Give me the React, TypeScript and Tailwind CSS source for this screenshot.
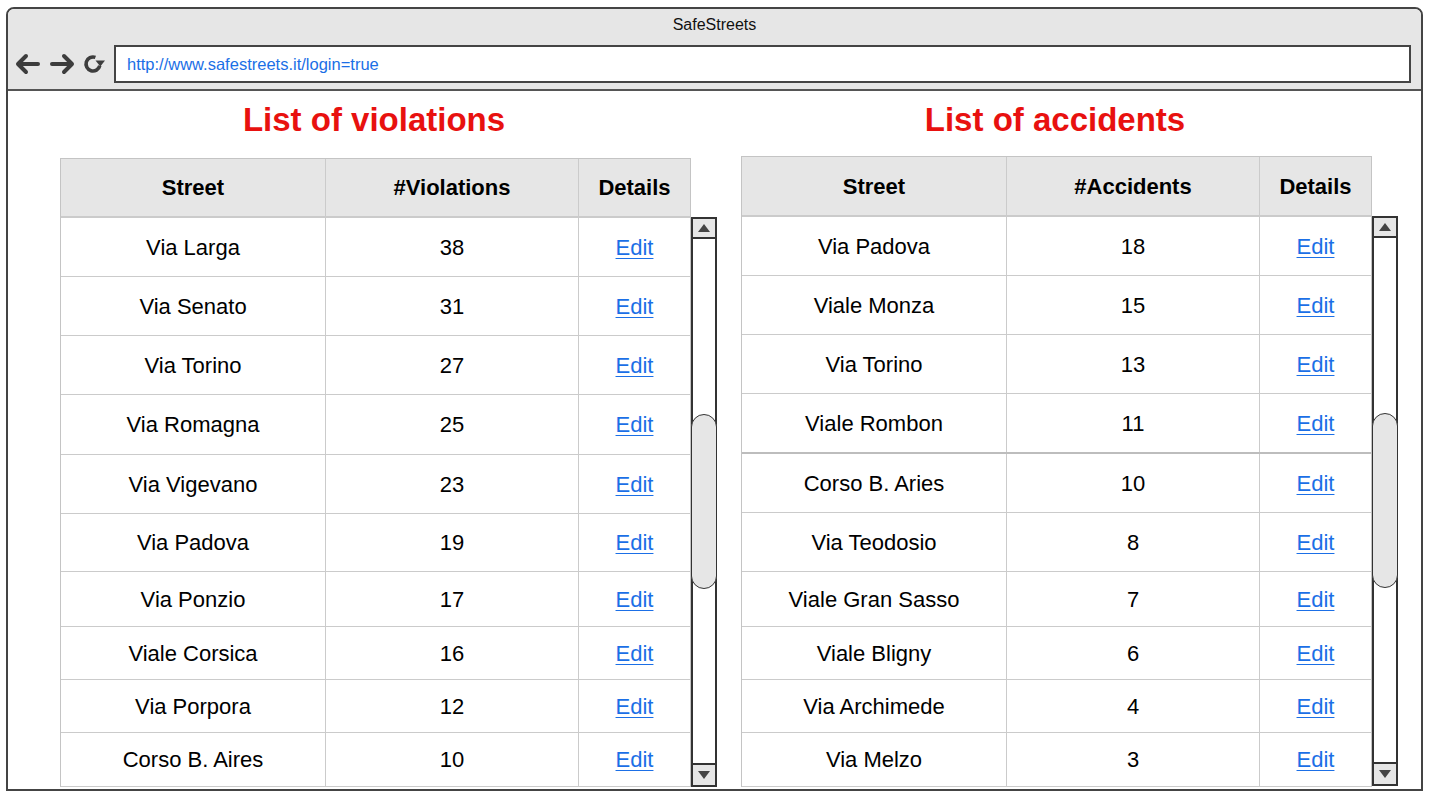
import React from 'react';

type Row = { street: string; count: number; h: number; thick?: boolean };

const violations: Row[] = [
  { street: 'Via Larga', count: 38, h: 59 },
  { street: 'Via Senato', count: 31, h: 59 },
  { street: 'Via Torino', count: 27, h: 59 },
  { street: 'Via Romagna', count: 25, h: 60 },
  { street: 'Via Vigevano', count: 23, h: 59 },
  { street: 'Via Padova', count: 19, h: 58 },
  { street: 'Via Ponzio', count: 17, h: 55 },
  { street: 'Viale Corsica', count: 16, h: 53 },
  { street: 'Via Porpora', count: 12, h: 53 },
  { street: 'Corso B. Aires', count: 10, h: 54 },
];

const accidents: Row[] = [
  { street: 'Via Padova', count: 18, h: 59 },
  { street: 'Viale Monza', count: 15, h: 59 },
  { street: 'Via Torino', count: 13, h: 59 },
  { street: 'Viale Rombon', count: 11, h: 60, thick: true },
  { street: 'Corso B. Aries', count: 10, h: 59 },
  { street: 'Via Teodosio', count: 8, h: 59 },
  { street: 'Viale Gran Sasso', count: 7, h: 55 },
  { street: 'Viale Bligny', count: 6, h: 53 },
  { street: 'Via Archimede', count: 4, h: 53 },
  { street: 'Via Melzo', count: 3, h: 54 },
];

const Scrollbar: React.FC<{ top: string }> = ({ top }) => (
  <div className={`${top} w-[26px] h-[570px] border-2 border-[#333] flex flex-col bg-white`}>
    <div className="h-[20px] bg-[#e6e6e6] border-b-2 border-[#333] flex items-center justify-center">
      <svg width="14" height="10" viewBox="0 0 14 10"><path d="M7 1 L13 9 L1 9 Z" fill="#444" /></svg>
    </div>
    <div className="mt-[175px] -mx-[2px] h-[175px] rounded-full bg-[#e6e6e6] border-[1.5px] border-[#333]" />
    <div className="flex-1" />
    <div className="h-[22px] bg-[#e6e6e6] border-t-2 border-[#333] flex items-center justify-center">
      <svg width="14" height="10" viewBox="0 0 14 10"><path d="M1 1 L13 1 L7 9 Z" fill="#444" /></svg>
    </div>
  </div>
);

const DataTable: React.FC<{ label: string; rows: Row[]; headH: string }> = ({ label, rows, headH }) => (
  <div className="w-[631px] border-l border-r border-t border-[#c4c4c4] text-[22px] text-black">
    <div className={`flex ${headH} bg-[#e6e6e6] border-b-2 border-[#cbcbcb] font-bold`}>
      <div className="w-[265px] border-r border-[#cbcbcb] flex items-center justify-center">Street</div>
      <div className="w-[253px] border-r border-[#cbcbcb] flex items-center justify-center">{label}</div>
      <div className="flex-1 flex items-center justify-center">Details</div>
    </div>
    {rows.map(r => (
      <div
        key={r.street}
        style={{ height: r.h }}
        className={`flex ${r.thick ? 'border-b-2 border-[#bdbdbd]' : 'border-b border-[#cbcbcb]'}`}
      >
        <div className="w-[265px] border-r border-[#cbcbcb] flex items-center justify-center">{r.street}</div>
        <div className="w-[253px] border-r border-[#cbcbcb] flex items-center justify-center">{r.count}</div>
        <div className="flex-1 flex items-center justify-center">
          <a className="text-[#1b6fe6] underline underline-offset-[3px] decoration-1">Edit</a>
        </div>
      </div>
    ))}
  </div>
);

const App: React.FC = () => {
  return (
    <div className="w-[1434px] h-[803px] bg-white pt-[7px] pl-[6px] font-['Liberation_Sans',Arial,sans-serif]">
      {/* Finestra del browser */}
      <div className="w-[1417px] h-[784px] border-2 border-[#444] rounded-t-[8px] overflow-hidden flex flex-col">
        <div className="h-[82px] bg-[#e6e6e6] border-b-2 border-[#555] flex flex-col">
          <div className="pt-[6px] text-[16px] leading-[20px] text-center text-[#111]">SafeStreets</div>
          <div className="mt-[10px] flex items-center">
            <div className="w-[106px] flex items-center gap-[8px] pl-[7px]">
              <svg width="26" height="22" viewBox="0 0 26 22" fill="none" stroke="#3d3d3d" strokeWidth="4" strokeLinecap="round" strokeLinejoin="round">
                <path d="M23 11 H4 M11 3 L3 11 L11 19" />
              </svg>
              <svg width="26" height="22" viewBox="0 0 26 22" fill="none" stroke="#3d3d3d" strokeWidth="4" strokeLinecap="round" strokeLinejoin="round">
                <path d="M3 11 H22 M15 3 L23 11 L15 19" />
              </svg>
              <svg width="22" height="22" viewBox="0 0 22 22">
                <path d="M12.4 4.4 A7 7 0 1 0 16.8 12.8" fill="none" stroke="#3d3d3d" strokeWidth="3.6" />
                <path d="M12.5 7.5 L22 7.5 L17.3 13.5 Z" fill="#3d3d3d" />
              </svg>
            </div>
            <div className="w-[1297px] h-[38px] bg-white border-2 border-[#444] flex items-center pl-[11px] text-[16.5px] text-[#1b6fe6]">
              http://www.safestreets.it/login=true
            </div>
          </div>
        </div>

        {/* Contenuto */}
        <div className="flex pl-[52px] gap-[24px]">
          <div className="flex flex-col">
            <h1 className="w-[628px] pt-[10px] text-center text-[33px] leading-[38px] font-bold text-[#e8110f]">List of violations</h1>
            <div className="mt-[19px] flex items-start">
              <DataTable label="#Violations" rows={violations} headH="h-[59px]" />
              <Scrollbar top="mt-[59px]" />
            </div>
          </div>
          <div className="flex flex-col">
            <h1 className="w-[628px] pt-[10px] text-center text-[33px] leading-[38px] font-bold text-[#e8110f]">List of accidents</h1>
            <div className="mt-[17px] flex items-start">
              <DataTable label="#Accidents" rows={accidents} headH="h-[60px]" />
              <Scrollbar top="mt-[60px]" />
            </div>
          </div>
        </div>
      </div>
    </div>
  );
};

export default App;
